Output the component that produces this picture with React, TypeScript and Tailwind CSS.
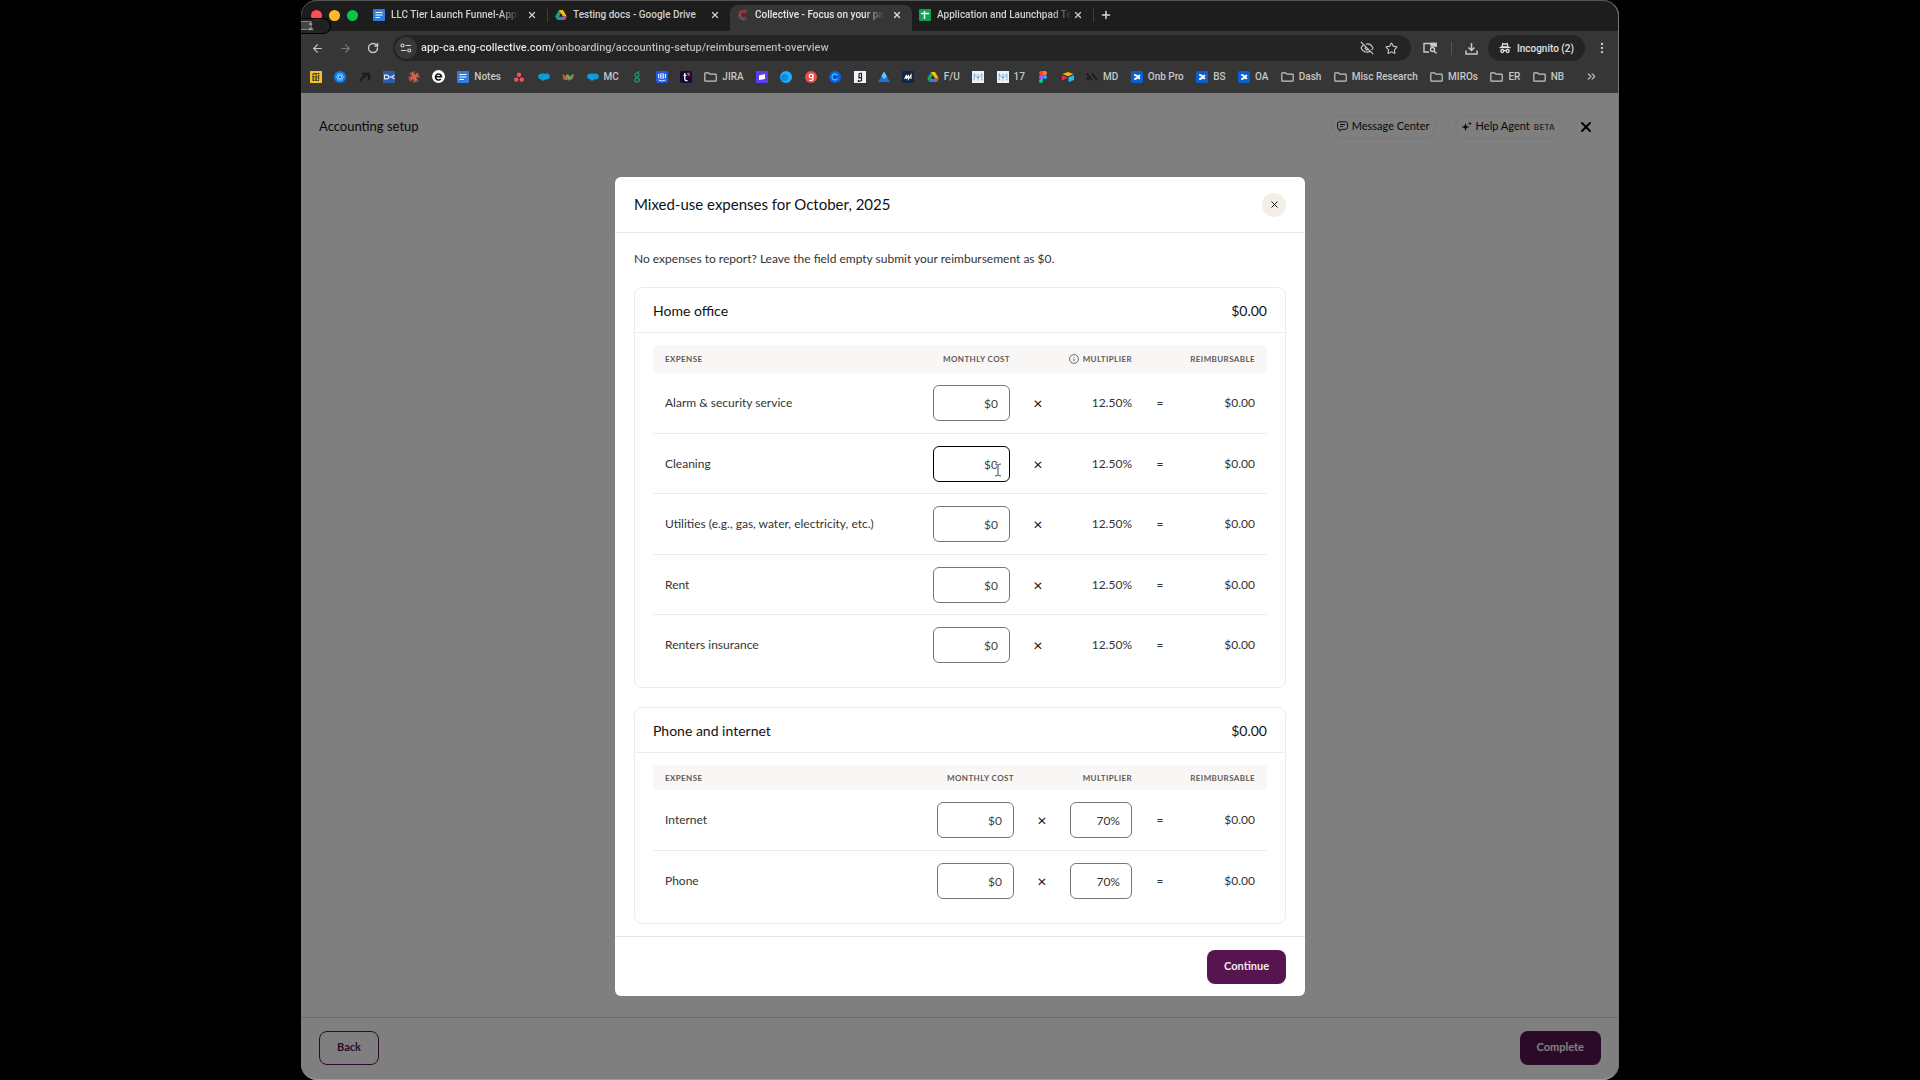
import React, { useState, ChangeEvent, ReactNode } from "react";
import { ArrowLeft, ArrowRight, RotateCw, EyeOff, Star, EllipsisVertical, Plus, X, ChevronsRight } from "lucide-react";

// Interfaces
interface IExpense {
  id: string;
  name: string;
  active?: boolean;
}

interface IBookmark {
  icon: ReactNode;
  label?: string;
  title: string;
}

type SectionProps = {
  title: string;
  expenses: IExpense[];
  editable?: boolean;
};

// Icons
const DocsIcon = () => (
  <svg width="12" height="12" viewBox="0 0 12 12">
    <rect width="12" height="12" rx="1" fill="#2f7de1" />
    <path d="M2.5 3.5h7M2.5 6h7M2.5 8.5h4.5" stroke="#fff" strokeWidth="1.2" />
  </svg>
);

const DriveIcon = () => (
  <svg width="12" height="12" viewBox="0 0 12 12">
    <path d="M4 1h4L6 4.6 2.2 11 .2 7.6z" fill="#20a464" />
    <path d="M4 1h4l3.8 6.6H7.9z" fill="#fbbc04" />
    <path d="M3.9 7.6h7.9L9.8 11H2.2z" fill="#3b7ded" />
    <path d="M7.9 7.6h3.9L9.8 11z" fill="#ea4335" />
    <path d="M6 4.6 7.8 7.6H4.2z" fill="#1d1d1d" />
  </svg>
);

const CollectiveIcon = () => (
  <svg width="12" height="12" viewBox="0 0 12 12" fill="none" stroke="#b8424f">
    <path d="M9.5 2.8A4.4 4.4 0 1 0 9.5 9.2" strokeWidth="2" strokeDasharray="1.2 .8" />
    <path d="M8.4 4.2A2.8 2.8 0 1 0 8.4 7.8" strokeWidth="1" />
  </svg>
);

const SheetsIcon = () => (
  <svg width="12" height="12" viewBox="0 0 12 12">
    <rect width="12" height="12" rx="1" fill="#12a150" />
    <path d="M2 4.5h8M5.5 2v8" stroke="#fff" strokeWidth="1.4" />
  </svg>
);

const CloudIcon = () => (
  <svg width="12" height="12" viewBox="0 0 12 12" fill="#0d9ddb">
    <circle cx="2.8" cy="5.4" r="2.6" />
    <circle cx="5.2" cy="4.4" r="2.2" />
    <circle cx="8.8" cy="5.4" r="3" />
    <circle cx="5" cy="7.4" r="2.4" />
    <rect x="3" y="4" width="6" height="4" />
  </svg>
);

const ConfluenceIcon = () => (
  <svg width="12" height="12" viewBox="0 0 12 12">
    <rect width="12" height="12" rx="2" fill="#0b5fd3" />
    <path d="M3.2 3.8q3 .2 5.6 4.2M3.2 8.2q3-.2 5.6-4.2" stroke="#fff" strokeWidth="1.8" fill="none" />
  </svg>
);

const MetabaseIcon = () => (
  <svg width="12" height="12" viewBox="0 0 12 12">
    <rect width="12" height="12" fill="#eef3f8" />
    <path d="M2.2 2.5v7.5M9.8 2.5v7.5M2.2 3.5 6 7l3.8-3.5M6 3v7" stroke="#6fa5d6" strokeWidth="1.2" strokeDasharray="1.1 .7" fill="none" />
  </svg>
);

const FolderIcon = () => (
  <svg width="13" height="10" viewBox="0 0 13 10" fill="none" stroke="#c7c7c7" strokeWidth="1.2">
    <path d="M.8 1.6q0-.8.8-.8h3l1.4 1.4h5.4q.8 0 .8.8v5.4q0 .8-.8.8H1.6q-.8 0-.8-.8z" />
  </svg>
);

const bookmarks: IBookmark[] = [
  {
    title: "Board",
    icon: (
      <svg width="12" height="12" viewBox="0 0 12 12">
        <rect width="12" height="12" fill="#f5c02e" />
        <path d="M9.5 2.6H3v6.8h6.500M3 6h5M6 2.600v7M8.600 4v5" stroke="#3a3518" strokeWidth="1.3" strokeDasharray="1.7 .5" fill="none" />
      </svg>
    ),
  },
  {
    title: "Atom",
    icon: (
      <svg width="12" height="12" viewBox="0 0 12 12" fill="none" stroke="#8fd0ff" strokeWidth=".7">
        <circle cx="6" cy="6" r="6" fill="#0a7ce8" stroke="none" />
        <ellipse cx="6" cy="6" rx="3.8" ry="1.6" />
        <ellipse cx="6" cy="6" rx="3.8" ry="1.6" transform="rotate(60 6 6)" />
        <ellipse cx="6" cy="6" rx="3.8" ry="1.6" transform="rotate(120 6 6)" />
      </svg>
    ),
  },
  {
    title: "Launch",
    icon: (
      <svg width="12" height="12" viewBox="0 0 12 12" stroke="#1d1d1d" strokeWidth="2.2" fill="none">
        <path d="M3 2.8h7v6.4M10 2.8Q4 5 1 10.500" />
      </svg>
    ),
  },
  {
    title: "Mail",
    icon: (
      <svg width="12" height="12" viewBox="0 0 12 12">
        <rect width="12" height="12" fill="#3059a8" />
        <path d="M1.5 4.200h2.5a1.800 1.800 0 0 1 0 3.600H1.500zM6 6h2.500l3-2M8.500 6l3 2" stroke="#dde6f7" strokeWidth="1.2" fill="none" />
      </svg>
    ),
  },
  {
    title: "Claude",
    icon: (
      <svg width="12" height="12" viewBox="0 0 12 12" stroke="#d9644a" strokeWidth="1.1">
        <path d="M6 .3v11.4M.3 6h11.4M2 2l8 8M10 2l-8 8M3.800 .8l4.400 10.400M11.200 3.800.8 8.200" />
      </svg>
    ),
  },
  {
    title: "Everlance",
    icon: (
      <svg width="13" height="13" viewBox="0 0 13 13" fill="none">
        <circle cx="6.5" cy="6.5" r="6.5" fill="#fff" />
        <path d="M3.5 6.8h6A3 3 0 1 0 8.8 9" stroke="#111" strokeWidth="1.6" />
      </svg>
    ),
  },
  { title: "Notes", label: "Notes", icon: <DocsIcon /> },
  {
    title: "Asana",
    icon: (
      <svg width="12" height="12" viewBox="0 0 12 12" fill="#f2545f">
        <circle cx="6" cy="3.8" r="2.2" />
        <circle cx="3.2" cy="8.6" r="2.2" />
        <circle cx="8.8" cy="8.6" r="2.2" />
      </svg>
    ),
  },
  { title: "Salesforce", icon: <CloudIcon /> },
  {
    title: "Workato",
    icon: (
      <svg width="12" height="12" viewBox="0 0 12 12" fill="none" strokeWidth="1.8">
        <path d="m.8 3.800 5 5" stroke="#e2573f" />
        <path d="m4.600 3.800 4 4" stroke="#f0b13b" />
        <path d="m3 8.200 3.800-4M6 9l5.400-5.400" stroke="#5fae5b" />
        <path d="m8.500 8.800 2.700-2.800M1 6.500l2 2" stroke="#e2573f" strokeWidth="1.400" />
      </svg>
    ),
  },
  { title: "Marketing Cloud", label: "MC", icon: <CloudIcon /> },
  {
    title: "Gusto",
    icon: (
      <svg width="12" height="12" viewBox="0 0 12 12" fill="none" stroke="#1f9d6b" strokeWidth="1.2">
        <circle cx="6" cy="4" r="2" />
        <circle cx="6" cy="9" r="2.2" />
        <path d="M6 2q1-1.2 2.4-1.4" />
      </svg>
    ),
  },
  {
    title: "Intercom",
    icon: (
      <svg width="12" height="12" viewBox="0 0 12 12" fill="none" stroke="#fff">
        <rect width="12" height="12" rx="2" fill="#1f59ea" stroke="none" />
        <path d="M2.5 3v4M4.3 2.4v5.4M6 2.2V8M7.7 2.4v5.4M9.5 3v4M2.5 9q3.5 2 7 0" strokeWidth=".9" />
      </svg>
    ),
  },
  {
    title: "Toggl",
    icon: (
      <svg width="12" height="12" viewBox="0 0 12 12" fill="none">
        <rect width="12" height="12" rx="2" fill="#1a0a33" />
        <path d="M4.8 2v6q0 2 2.7 1.6M3.5 4.4h3" stroke="#fff" strokeWidth="1.3" />
        <path d="M7 2.5h2V5" stroke="#f0454b" strokeWidth="1.5" />
      </svg>
    ),
  },
  { title: "JIRA", label: "JIRA", icon: <FolderIcon /> },
  {
    title: "Loom",
    icon: (
      <svg width="12" height="12" viewBox="0 0 12 12">
        <rect width="12" height="12" fill="#5a3df0" />
        <path d="m3 4.5 6-1.500v5L3 9z" fill="#fff" />
      </svg>
    ),
  },
  {
    title: "Circle",
    icon: (
      <svg width="12" height="12" viewBox="0 0 12 12">
        <circle cx="6" cy="6" r="6" fill="#18b4fb" />
        <circle cx="4.5" cy="6.5" r="3.5" fill="#1187e0" />
      </svg>
    ),
  },
  {
    title: "Guru",
    icon: (
      <svg width="12" height="12" viewBox="0 0 12 12" fill="none">
        <circle cx="6" cy="6" r="6" fill="#ee4a4a" />
        <circle cx="6" cy="5" r="1.8" stroke="#fff" strokeWidth="1.2" />
        <path d="M8 3v5q-.3 2-3.7 1.3" stroke="#fff" strokeWidth="1.2" />
      </svg>
    ),
  },
  {
    title: "Calendly",
    icon: (
      <svg width="12" height="12" viewBox="0 0 12 12" fill="none">
        <circle cx="6" cy="6" r="6" fill="#0b5fe0" />
        <path d="M8.5 4.3a3 3 0 1 0 0 3.4" stroke="#3ec0ff" strokeWidth="1.3" />
        <circle cx="6" cy="6" r="1.2" fill="#063b9a" />
      </svg>
    ),
  },
  {
    title: "Guideline",
    icon: (
      <svg width="12" height="12" viewBox="0 0 12 12" fill="none" stroke="#1b1b2b" strokeWidth="1.2">
        <rect width="12" height="12" fill="#f1f1f7" stroke="none" />
        <path d="M7.8 2 5 3v4l2.5-.8V2.5M7.5 6v3.5l-3 1V9" />
      </svg>
    ),
  },
  {
    title: "Azure",
    icon: (
      <svg width="12" height="12" viewBox="0 0 12 12">
        <path d="M6 .5 12 11H0z" fill="#1e73d8" />
        <path d="M6 .5 9 5.8 6 8 3.5 5z" fill="#6cc0ff" />
      </svg>
    ),
  },
  {
    title: "Monarch",
    icon: (
      <svg width="12" height="12" viewBox="0 0 12 12">
        <rect width="12" height="12" rx="1" fill="#0f2740" />
        <path d="m2.5 8 2-4v4l2-4v4L9 4v4" stroke="#fff" strokeWidth="1.1" fill="none" />
      </svg>
    ),
  },
  { title: "Follow up", label: "F/U", icon: <DriveIcon /> },
  { title: "Metabase", icon: <MetabaseIcon /> },
  { title: "Metabase 17", label: "17", icon: <MetabaseIcon /> },
  {
    title: "Figma",
    icon: (
      <svg width="12" height="12" viewBox="0 0 12 12">
        <path d="M6 0v4H4a2 2 0 0 1 0-4z" fill="#f24e1e" />
        <path d="M6 0h2a2 2 0 0 1 0 4H6z" fill="#ff7262" />
        <path d="M6 4v4H4a2 2 0 0 1 0-4z" fill="#a259ff" />
        <circle cx="8" cy="6" r="2" fill="#1abcfe" />
        <path d="M6 8v2a2 2 0 1 1-2-2z" fill="#0acf83" />
      </svg>
    ),
  },
  {
    title: "Airtable",
    icon: (
      <svg width="12" height="12" viewBox="0 0 12 12">
        <path d="m6 1 5.5 2L6 5.2.5 3z" fill="#fcb400" />
        <path d="m6.5 6.2 5.500-2V9l-5.500 2z" fill="#18bfff" />
        <path d="m0 4.5 5.500 2L0 9.500z" fill="#f82b60" />
      </svg>
    ),
  },
  {
    title: "MD",
    label: "MD",
    icon: (
      <svg width="12" height="12" viewBox="0 0 12 12" stroke="#1a1a1a" strokeWidth="1.8">
        <path d="m.8 2.800 5 6.200M6 2.800 11 9M.8 6.500 2.800 9" />
      </svg>
    ),
  },
  { title: "Onb Pro", label: "Onb Pro", icon: <ConfluenceIcon /> },
  { title: "BS", label: "BS", icon: <ConfluenceIcon /> },
  { title: "OA", label: "OA", icon: <ConfluenceIcon /> },
  { title: "Dash", label: "Dash", icon: <FolderIcon /> },
  { title: "Misc Research", label: "Misc Research", icon: <FolderIcon /> },
  { title: "MIROs", label: "MIROs", icon: <FolderIcon /> },
  { title: "ER", label: "ER", icon: <FolderIcon /> },
  { title: "NB", label: "NB", icon: <FolderIcon /> },
];

const tabs = [
  { title: "LLC Tier Launch Funnel-Appl", icon: <DocsIcon /> },
  { title: "Testing docs - Google Drive", icon: <DriveIcon />, full: true },
  { title: "Collective - Focus on your pa", icon: <CollectiveIcon />, active: true },
  { title: "Application and Launchpad Te", icon: <SheetsIcon /> },
];

const homeOffice: IExpense[] = [
  { id: "alarm", name: "Alarm & security service" },
  { id: "cleaning", name: "Cleaning", active: true },
  { id: "utilities", name: "Utilities (e.g., gas, water, electricity, etc.)" },
  { id: "rent", name: "Rent" },
  { id: "renters", name: "Renters insurance" },
];

const phoneInternet: IExpense[] = [
  { id: "internet", name: "Internet" },
  { id: "phone", name: "Phone" },
];

const TabStrip = () => (
  <div className="flex h-[31px] items-end bg-[#1d1d1d]">
    <div className="flex h-full w-[65px] shrink-0 items-center gap-[7px] pl-[10px]">
      <span className="h-[11px] w-[11px] rounded-full bg-[#ff4d57]" />
      <span className="h-[11px] w-[11px] rounded-full bg-[#fdb92e]" />
      <span className="h-[11px] w-[11px] rounded-full bg-[#0ac251]" />
    </div>
    {tabs.map((tab, i) => (
      <div
        key={tab.title}
        className={
          tab.active
            ? "flex h-[26px] w-[182px] items-center rounded-t-lg bg-[#363636] pb-[6px] pl-[7px] text-[#e3e3e3]"
            : "flex h-[26px] w-[182px] items-center pb-[6px] pl-[7px] text-[#cfcfcf]"
        }
      >
        <button className="flex flex-1 items-center gap-[6px] text-left">
          <span className="shrink-0">{tab.icon}</span>
          <span
            className={
              tab.full
                ? "text-[10px] leading-[14px] font-medium whitespace-nowrap"
                : "text-[10px] leading-[14px] font-medium whitespace-nowrap [mask-image:linear-gradient(to_right,black_85%,transparent)]"
            }
          >
            {tab.title}
          </span>
        </button>
        <button aria-label="Close tab" className="mr-[10px] shrink-0">
          <X size={10} strokeWidth={3} />
        </button>
        {(i === 0 || i === 3) && <span className="h-[13px] w-px bg-[#3f3f3f]" />}
      </div>
    ))}
    <button aria-label="New tab" className="flex h-[26px] w-6 items-center justify-center pb-[6px] text-[#d8d8d8]">
      <Plus size={12} strokeWidth={3} />
    </button>
  </div>
);

const Toolbar = () => {
  const [url, setUrl] = useState<string>("app-ca.eng-collective.com/onboarding/accounting-setup/reimbursement-overview");

  return (
    <div className="flex h-[34px] items-center bg-[#363636] pr-[10px] text-[#c9c9c9]">
      <div className="flex w-[92px] shrink-0 items-center gap-[15px] pl-[10px]">
        <button aria-label="Back"><ArrowLeft size={13} strokeWidth={2} /></button>
        <button aria-label="Forward" className="text-[#777]"><ArrowRight size={13} strokeWidth={2} /></button>
        <button aria-label="Reload"><RotateCw size={12} strokeWidth={3} /></button>
      </div>
      <div className="flex h-[26px] flex-1 items-center rounded-full bg-[#242424] px-[2px]">
        <button aria-label="Site settings" className="mr-1 flex h-[22px] w-[22px] items-center justify-center rounded-full bg-[#383838]">
          <svg width="12" height="10" viewBox="0 0 12 10" fill="none" stroke="#d0d0d0" strokeWidth="1.2">
            <circle cx="2.5" cy="2.5" r="1.5" />
            <path d="M5.5 2.5H11M1 7.5h5.5" />
            <circle cx="9.3" cy="7.5" r="1.5" />
          </svg>
        </button>
        <input
          type="text"
          aria-label="Address"
          value={url}
          onChange={(e: ChangeEvent<HTMLInputElement>) => setUrl(e.target.value)}
          className="min-w-0 flex-1 bg-[linear-gradient(90deg,#e8e8e8_134px,#bdbdbd_134px)] bg-clip-text pt-px text-[11px] font-medium text-transparent outline-none"
        />
        <div className="flex items-center gap-[11px] pr-[11px]">
          <button aria-label="Tracking blocked"><EyeOff size={14} strokeWidth={2} /></button>
          <button aria-label="Bookmark"><Star size={13} strokeWidth={2} /></button>
        </div>
      </div>
      <button aria-label="Search tabs" className="ml-3">
        <svg width="14" height="12" viewBox="0 0 14 12" fill="none" stroke="#c9c9c9" strokeWidth="1.4">
          <path d="M6 10H1V1.5h12V5" />
          <path d="M8 1.5h5V4H8z" fill="#c9c9c9" />
          <circle cx="9.5" cy="7.5" r="2" />
          <path d="m11 9 2.5 2.5" />
        </svg>
      </button>
      <span className="ml-[14px] h-[13px] w-px bg-[#555]" />
      <button aria-label="Downloads" className="ml-[13px]">
        <svg width="13" height="13" viewBox="0 0 13 13" fill="none" stroke="#c9c9c9" strokeWidth="1.5">
          <path d="M6.5 1v7M3.5 5.5l3 3 3-3M1 8.5V12h11V8.5" />
        </svg>
      </button>
      <button className="ml-[10px] flex h-[26px] items-center gap-[6px] rounded-full bg-[#242424] px-[11px] text-[10px] font-medium text-[#e0e0e0]">
        <svg width="12" height="12" viewBox="0 0 12 12" fill="none" stroke="#e0e0e0" strokeWidth="1.3">
          <path d="M.5 5.5h11" />
          <path d="M3 5 3.8 1.5l2.200.7 2.200-.7L9 5z" />
          <circle cx="3.3" cy="9" r="1.5" />
          <circle cx="8.7" cy="9" r="1.5" />
          <path d="M4.8 8.7q1.200-.7 2.400 0" />
        </svg>
        Incognito (2)
      </button>
      <button aria-label="Menu" className="ml-[10px]"><EllipsisVertical size={14} strokeWidth={2} /></button>
    </div>
  );
};

const BookmarkBar = () => (
  <nav className="flex h-[28px] items-center justify-between bg-[#363636] pb-[5px] pl-[9px] pr-[21px] text-[10px] font-medium text-[#c7c7c7]">
    {bookmarks.map((b) => (
      <a key={b.title} href="#" aria-label={b.title} className="flex items-center gap-[5px] whitespace-nowrap">
        {b.icon}
        {b.label}
      </a>
    ))}
    <button aria-label="More bookmarks" className="ml-2"><ChevronsRight size={13} strokeWidth={2} /></button>
  </nav>
);

const TextCursor = () => (
  <svg width="8" height="14" viewBox="0 0 8 14" fill="none" className="pointer-events-none absolute top-[29px] right-5">
    <path d="M1 1q3 0 3 1.5v9M7 1Q4 1 4 2.5M1 13q3 0 3-1.500Q4 13 7 13" stroke="#fff" strokeWidth="2.4" />
    <path d="M1 1q3 0 3 1.5v9M7 1Q4 1 4 2.5M1 13q3 0 3-1.500Q4 13 7 13" stroke="#3c4a52" />
  </svg>
);

const ExpenseSection = ({ title, expenses, editable }: SectionProps) => {
  const [costs, setCosts] = useState<Record<string, string>>({});
  const [rates, setRates] = useState<Record<string, string>>({});

  return (
    <section className="rounded-lg border border-[#ececec]">
      <div className="flex h-[45px] items-center justify-between border-b border-[#ececec] px-[18px] text-[14px] text-[#111]">
        <h3>{title}</h3>
        <span>$0.00</span>
      </div>
      <div className="px-[18px] py-3">
        <table className="w-full table-fixed border-separate border-spacing-0">
          <colgroup>
            <col />
            <col className="w-[101px]" />
            <col className="w-[32px]" />
            <col className={editable ? "w-[86px]" : "w-[90px]"} />
            <col className="w-[32px]" />
            <col className="w-[91px]" />
          </colgroup>
          <thead>
            <tr
              className={
                editable
                  ? "h-[25px] text-[8px] leading-[12px] text-[#5c5a58]"
                  : "h-[28px] text-[8px] leading-[12px] text-[#5c5a58]"
              }
            >
              <th className="rounded-l bg-[#f8f7f6] px-3 text-left font-bold tracking-wider">EXPENSE</th>
              <th className="bg-[#f8f7f6] pr-3 text-right font-bold tracking-wider whitespace-nowrap">MONTHLY COST</th>
              <th className="bg-[#f8f7f6]" />
              <th className="bg-[#f8f7f6] pr-3 font-bold tracking-wider">
                <span className="flex items-center justify-end gap-1">
                  {!editable && (
                    <svg width="10" height="10" viewBox="0 0 10 10" fill="none" stroke="#5c5a58" className="shrink-0">
                      <circle cx="5" cy="5" r="4.4" strokeWidth=".9" />
                      <path d="M5 4.6v2.6M5 2.8v.9" />
                    </svg>
                  )}
                  MULTIPLIER
                </span>
              </th>
              <th className="bg-[#f8f7f6]" />
              <th className="rounded-r bg-[#f8f7f6] pr-3 text-right font-bold tracking-wider">REIMBURSABLE</th>
            </tr>
          </thead>
          <tbody className="text-[12px] text-[#333] [&>tr:not(:last-child)>td]:border-b [&>tr:not(:last-child)>td]:border-[#ececec]">
            {expenses.map((expense) => (
              <tr key={expense.id} className="h-[60px] odd:not-last:h-[61px]">
                <td className="pl-3">
                  <label htmlFor={expense.id}>{expense.name}</label>
                </td>
                <td className="relative pt-3 pl-3 align-top">
                  <input
                    id={expense.id}
                    type="text"
                    value={costs[expense.id] ?? "$0"}
                    onChange={(e: ChangeEvent<HTMLInputElement>) => setCosts({ ...costs, [expense.id]: e.target.value })}
                    className={
                      expense.active
                        ? "block h-9 w-[77px] rounded-md border border-black pr-[11px] text-right text-[#444] outline-none"
                        : "block h-9 w-[77px] rounded-md border border-[#77757a] pr-[11px] text-right text-[#444] outline-none"
                    }
                  />
                  {expense.active && <TextCursor />}
                </td>
                <td className="text-center text-[16px] leading-none text-[#111]">×</td>
                <td className={editable ? "pt-3 pl-3 align-top" : "pr-3 text-right"}>
                  {editable ? (
                    <input
                      type="text"
                      aria-label={`${expense.name} multiplier`}
                      value={rates[expense.id] ?? "70%"}
                      onChange={(e: ChangeEvent<HTMLInputElement>) => setRates({ ...rates, [expense.id]: e.target.value })}
                      className="block h-9 w-[62px] rounded-md border border-[#77757a] pr-[11px] text-right outline-none"
                    />
                  ) : (
                    "12.50%"
                  )}
                </td>
                <td className="text-center">=</td>
                <td className="pr-3 text-right">$0.00</td>
              </tr>
            ))}
          </tbody>
        </table>
      </div>
    </section>
  );
};

const ExpensesDialog = () => (
  <div role="dialog" aria-labelledby="dialog-title" className="flex h-full w-[690px] flex-col rounded-md bg-white">
    <header className="flex h-[56px] shrink-0 items-center justify-between border-b border-[#e9e7e3] px-[19px]">
      <h2 id="dialog-title" className="text-[15px] text-[#111]">
        Mixed-use expenses for October, 2025
      </h2>
      <button aria-label="Close" className="flex h-6 w-6 items-center justify-center rounded-full bg-[#f3eee8] text-black">
        <X size={11} strokeWidth={2} />
      </button>
    </header>
    <div className="flex min-h-0 flex-1 flex-col overflow-hidden px-[19px] pt-[18px]">
      <p className="mb-5 text-[12px] leading-[16px] text-[#333]">
        No expenses to report? Leave the field empty submit your reimbursement as $0.
      </p>
      <div className="flex flex-col gap-[19px]">
        <ExpenseSection title="Home office" expenses={homeOffice} />
        <ExpenseSection title="Phone and internet" expenses={phoneInternet} editable />
      </div>
    </div>
    <footer className="flex h-[60px] shrink-0 items-center justify-end border-t border-[#e4e4e4] px-[19px]">
      <button className="h-[34px] rounded-lg bg-[#571550] px-[17px] text-[11px] font-bold text-[#f3e9f2]">Continue</button>
    </footer>
  </div>
);

const App = () => {
  return (
    <div className="h-screen overflow-hidden bg-black px-[301px] font-['Roboto',sans-serif]">
      <div className="relative flex h-full flex-col overflow-hidden rounded-[16px] bg-white">
        <TabStrip />
        <Toolbar />
        <BookmarkBar />

        {/* screen share badge */}
        <div className="absolute top-[18px] left-0 flex h-4 w-[30px] items-center rounded-r-full border border-l-0 border-black bg-[#222]/90">
          <svg width="13" height="10" viewBox="0 0 13 10" fill="#444" stroke="#888">
            <path d="M0 .5h10.500v8H0" />
            <circle cx="9.5" cy="3" r="2" fill="#999" stroke="#222" strokeWidth=".6" />
            <path d="M6.500 9.5q0-3.500 3-3.500t3 3.500z" fill="#999" stroke="#222" strokeWidth=".6" />
          </svg>
        </div>

        <div className="relative flex min-h-0 flex-1 flex-col font-['Lato',sans-serif]">
          <header className="flex h-[67px] items-center justify-between pr-[25px] pl-[18px]">
            <h1 className="text-[13px] text-[#111]">Accounting setup</h1>
            <div className="flex items-center">
              <button className="flex h-6 items-center gap-1 rounded-full border border-[#eee] px-[5px] text-[11px] text-[#111]">
                <svg width="11" height="11" viewBox="0 0 11 11" fill="none" stroke="#222">
                  <path d="M2.5.8h6a2 2 0 0 1 2 2v3.500a2 2 0 0 1-2 2H5L2.800 10.200V8.300h-.3a2 2 0 0 1-2-2V2.800a2 2 0 0 1 2-2zM3 3.500h5M3 5.500h3" />
                </svg>
                Message Center
              </button>
              <button className="ml-[19px] flex h-6 items-center gap-1 rounded-full border border-[#eee] px-[5px] text-[11px] text-[#111]">
                <svg width="11" height="11" viewBox="0 0 11 11" fill="#111">
                  <path d="M4.500 2 5.500 5l3 1-3 1-1 3-1-3-3-1 3-1zM9 .5l.5 1.500 1.500.5-1.500.5L9 4.500 8.500 3 7 2.500 8.500 2z" />
                </svg>
                Help Agent
                <span className="text-[8px] font-bold tracking-wider text-[#555]">BETA</span>
              </button>
              <button aria-label="Close setup" className="ml-[17px] text-black">
                <X size={16} strokeWidth={3} />
              </button>
            </div>
          </header>
          <div className="flex-1" />
          <footer className="flex h-[63px] items-center justify-between border-t border-[#d8d8d8] px-[18px] pb-[3px]">
            <button className="h-[34px] rounded-lg border border-[#571550] px-[17px] text-[11px] font-bold text-[#571550]">Back</button>
            <button className="h-[34px] rounded-lg bg-[#571550] px-[17px] text-[11px] font-bold text-white">Complete</button>
          </footer>

          <div className="absolute inset-0 flex justify-center bg-black/50 py-[84px]">
            <ExpensesDialog />
          </div>
        </div>

        {/* window edge */}
        <div className="pointer-events-none absolute inset-0 rounded-[16px] border border-l-0 border-t-[#555] border-r-[#777] border-b-[#999]" />
      </div>
    </div>
  );
};

export default App;
